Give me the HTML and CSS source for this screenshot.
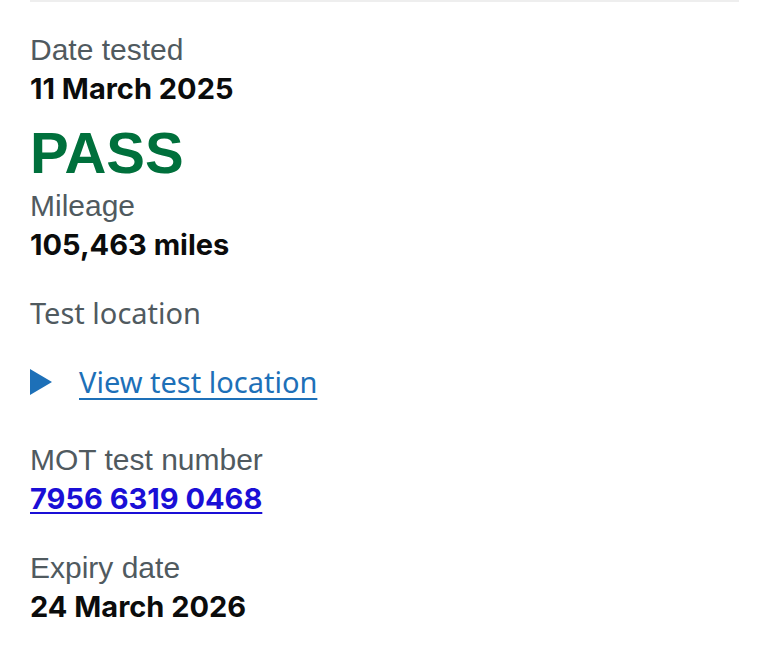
FILE: index.html
```html
<!DOCTYPE html>
<html lang="en">
<head>
<meta charset="utf-8">
<title>MOT test result</title>
<link rel="stylesheet" href="styles.css">
</head>
<body>
<main class="page">
  <section class="result">
    <dl class="facts">
      <dt class="label">Date tested</dt>
      <dd class="value">11 March 2025</dd>
      <dd class="status">PASS</dd>
      <dt class="label label-tight">Mileage</dt>
      <dd class="value">105,463 miles</dd>
      <dt class="label label-alt label-spaced">Test location</dt>
      <dd class="details">
        <span class="details-summary">
          <svg class="details-arrow" viewBox="0 0 22 26" aria-hidden="true"><polygon points="0,0 22,13 0,26" fill="#1d70b8"/></svg>
          <a class="details-link" href="#">View test location</a>
        </span>
      </dd>
      <dt class="label label-after-details">MOT test number</dt>
      <dd class="value"><a class="test-number" href="#">7956 6319 0468</a></dd>
      <dt class="label label-spaced-lg">Expiry date</dt>
      <dd class="value">24 March 2026</dd>
    </dl>
  </section>
</main>
</body>
</html>
```
FILE: styles.css
```css
html, body {
  margin: 0;
  padding: 0;
  background: #ffffff;
}

.page {
  padding: 0 29px 0 30px;
  font-family: "Liberation Sans", Arial, sans-serif;
}

.result {
  border-top: 2px solid #eeeeee;
  padding-top: 28px;
}

.facts {
  margin: 0;
}

.label {
  margin: 0;
  font-size: 30px;
  line-height: 39px;
  color: #505a5f;
  font-weight: 400;
}

.label-alt {
  font-family: "Noto Sans", sans-serif;
  font-size: 29px;
}

.label-tight {
  margin-top: 3px;
}

.label-spaced {
  margin-top: 29px;
}

.label-spaced-lg {
  margin-top: 30px;
}

.label-after-details {
  margin-top: 39px;
}

.value {
  margin: 0;
  font-family: "Inter", "Liberation Sans", sans-serif;
  font-size: 29px;
  line-height: 39px;
  font-weight: 700;
  color: #0b0c0c;
}

.status {
  margin: 15px 0 0;
  font-size: 58px;
  line-height: 60px;
  font-weight: 700;
  color: #00703c;
}

.details {
  margin: 30px 0 0;
  font-family: "Noto Sans", sans-serif;
  font-size: 29px;
  line-height: 39px;
}

.details-summary {
  display: flex;
  align-items: center;
  gap: 27px;
}

.details-arrow {
  width: 22px;
  height: 26px;
  flex: none;
}

.details-link {
  color: #1d70b8;
  text-decoration: underline;
  text-decoration-thickness: 2px;
  text-underline-offset: 5px;
}

.test-number {
  color: #1a0fd6;
  text-decoration: underline;
  text-decoration-thickness: 2px;
  text-underline-offset: 3px;
}
```
